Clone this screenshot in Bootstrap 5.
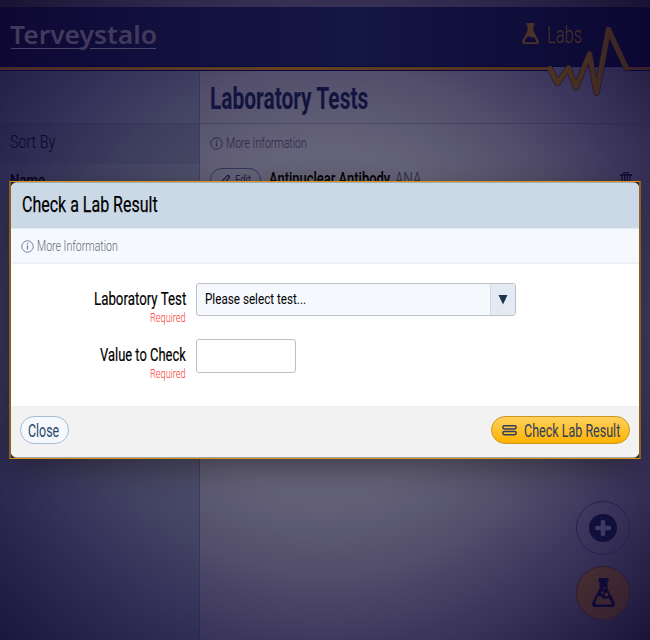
<!DOCTYPE html>
<html lang="en">
<head>
<meta charset="utf-8">
<meta name="viewport" content="width=device-width, initial-scale=1">
<title>Laboratory Tests</title>
<link href="https://cdn.jsdelivr.net/npm/bootstrap@5.3.0/dist/css/bootstrap.min.css" rel="stylesheet">
<style>
body{width:650px;height:640px;overflow:hidden;font-family:Roboto,"Open Sans",sans-serif;color:#000;
 background:radial-gradient(farthest-corner at 50% 50%,#69677d 0,#656379 38%,#524e6b 56%,#3b345b 74%,#1b1439 100%)}
.fit{display:inline-block;white-space:nowrap;line-height:1;text-align:left;flex:none;vertical-align:top}
.fit>span{display:inline-block;transform-origin:0 50%;vertical-align:top}
.topstrip{height:7px;background:rgba(20,10,30,.2)}
.masthead{height:60px;background:linear-gradient(90deg,#0e0733,#12113f 28%,#141643 55%,#100f3c 76%,#0c0632);border-bottom:1px solid #090238;padding:15px 0 0 10px}
.brand{font:600 25px/1 "Noto Sans","Open Sans",sans-serif;color:#423a5d}
.brandline{display:block;margin-top:1px}
.labs{color:#4a3229;font-size:24px;margin:1px 67px 0 0}
.pulse{left:0;top:20px;pointer-events:none}
.trace-edge{stroke:#1c1236;stroke-width:6.2}
.trace{stroke:url(#amber);stroke-width:5}
.trace-flat{stroke-width:3}.edge-flat{stroke-width:5;stroke:#0c0440}
.main-row{height:573px}
.side{width:200px;background:rgba(22,34,76,.24);border-right:1px solid rgba(30,30,80,.3);padding-top:56px}
.sort{height:41px;border-top:1px solid rgba(30,30,80,.15);background:rgba(20,20,50,.1);padding:8px 0 0 10px;font-size:19px;font-weight:300;color:#0b062a}
.namerow{padding:8px 0 0 10px;font-size:17px;font-weight:500;color:#060220}
.pagehead{height:57px;padding:16px 0 0 10px;border-bottom:1px solid rgba(30,30,80,.3);font-size:31px;font-weight:700;color:#13133f}
.info{font-size:14.5px;font-weight:300}
.info .fit{position:relative;top:1px}
.dim-info{height:44px;padding:0 0 5px 10px;color:#2c2845}
.testrow{padding-left:10px;height:24px}
.editpill{width:51px;height:24px;border:1px solid #33355c;border-radius:12px;color:#1b1d4a;font-size:13px;padding-left:8px}
.round-btn{width:54px;height:54px;border-radius:50%}
.fabs{right:20px;top:501px;gap:11px}
.fab-add{border:1px solid #252252}
.fab-lab{border:1px solid #2d1c30;background:linear-gradient(135deg,#482e32,#33202f)}
.dialog{left:9px;top:181px;width:632px;height:278px;border:solid;border-width:1px 2px;border-color:#d8930f #876022;background:#2c2838;box-shadow:0 9px 28px rgba(20,15,15,.45)}
.sheet{height:276px;border-radius:6px;overflow:hidden;background:#fff;border-top:1px solid #9eabba;border-bottom:1px solid #9ba1b2}
.dlg-title{height:45px;background:#cbd9e6;padding:11px 0 0 11px;font-size:22px;font-weight:400;-webkit-text-stroke:.25px #000}
.dlg-info{height:36px;background:#f5f9fe;border-bottom:2px solid #eff0f7;border-top:1px solid #e2eaf3;padding:1px 0 0 10px;color:#666a73}
.dlg-body{height:142px;padding-top:19px}
.field{height:56px;gap:10px}
.lab-col{width:175px;padding-top:7px;font-size:18.5px;font-weight:400;line-height:1;gap:2px}
.lab-name{-webkit-text-stroke:.2px #000}
.req{font-size:13px;font-weight:300;color:#ff3030}
.picker{width:320px;height:33px;border:1px solid #c0c1c5;border-radius:3px;background:#f5f9fe;font-size:15.5px;padding-left:8px;overflow:hidden}
.picker .fit{padding-top:1px}
.arrow{width:25px;background:#e3eaf4;border-left:1px solid #d2dae5}
.valuebox{width:100px;height:34px;border:1px solid #bfbfbf;border-radius:3px;background:#fff}
.dlg-foot{height:52px;background:#f2f2f2;padding:9px 9px 0;border-top:1px solid #ededed}
.pill{height:28px;border-radius:14px;font-size:18px;font-weight:400;color:#2a446c;padding:1px 0 0}
.pill-close{width:49px;border:1px solid #a9bdd4;background:#f5f8fd;padding-right:2px}
.pill-check{width:139px;border:1px solid #cd951d;background:linear-gradient(#ffd15d,#ffb300);color:#2b3c60;gap:7px}
</style>
<script src="https://cdn.jsdelivr.net/npm/bootstrap@5.3.0/dist/js/bootstrap.bundle.min.js"></script>
</head>
<body class="position-relative">
<div class="topstrip"></div>
<header class="masthead position-relative d-flex justify-content-between align-items-start">
  <div>
    <div class="fit brand" data-w="147"><span>Terveystalo</span></div>
    <svg class="brandline" width="147" height="3"><path d="M1 .5H71M80 .5H146" stroke="#4c4466"/></svg>
  </div>
  <div class="labs d-flex align-items-start">
    <svg width="17" height="22" viewBox="0 0 17 22"><path d="M4.500 0h8v2.200h-1v6l5 9q1.500 3.800-2 3.800h-12q-3.500 0-2-3.800l5-9v-6h-1z" fill="currentColor"/><path d="M5 14q2-1.500 3.500 0t3.500 0l2 3.500q1 1.700-1 1.700H4q-2 0-1-1.700z" fill="#0f0a3a"/></svg>
    <span class="fit fw-light" style="margin:0 1px 0 8px" data-w="35"><span>Labs</span></span>
  </div>
  <svg class="pulse position-absolute" width="650" height="72" viewBox="0 27 650 72" fill="none" stroke-linejoin="round" stroke-linecap="round">
    <defs><linearGradient id="amber" gradientUnits="userSpaceOnUse" x1="0" x2="650" y1="0" y2="0"><stop stop-color="#472c29"/><stop offset=".45" stop-color="#66431f"/><stop offset=".85" stop-color="#4c321f"/><stop offset="1" stop-color="#362226"/></linearGradient></defs>
    <path class="trace-edge edge-flat" d="M0 68.5H550M627 68.5H650"/>
    <path class="trace-edge" d="M550 68.5L557.5 83L568.5 68L576 87.500L589.500 54L596.500 93L608.500 29.500L626.500 68.500"/>
    <path class="trace trace-flat" d="M0 68.5H550M627 68.500H650"/>
    <path class="trace" d="M550 68.5L557.5 83L568.5 68L576 87.500L589.500 54L596.500 93L608.500 29.500L626.500 68.500"/>
  </svg>
</header>
<div class="main-row d-flex">
  <aside class="side flex-shrink-0">
    <div class="sort"><span class="fit" data-w="45"><span>Sort By</span></span></div>
    <div class="namerow"><span class="fit" data-w="35"><span>Name</span></span></div>
  </aside>
  <main class="flex-grow-1">
    <div class="pagehead"><h1 class="fit m-0" style="font-size:inherit;font-weight:inherit" data-w="158"><span>Laboratory Tests</span></h1></div>
    <div class="info dim-info d-flex align-items-center">
      <svg style="margin-right:3px" width="13" height="13" viewBox="0 0 13 13" fill="none" stroke="currentColor"><circle cx="6.500" cy="6.500" r="5.700"/><path d="M6.500 5.600v4M6.500 3.200v1.200" stroke-width="1.300"/></svg>
      <span class="fit" data-w="81"><span>More Information</span></span>
    </div>
    <div class="testrow d-flex align-items-center">
      <div class="editpill d-flex align-items-center">
        <svg width="12" height="13" viewBox="0 0 12 13" fill="none" stroke="currentColor" stroke-width="1.200"><path d="M1 12l1-4 6-6q1-1 2 0t0 2L4.500 10zM2.300 8.300l2 1.800"/></svg>
        <span class="fit" style="margin:-2px 0 0 4px" data-w="16"><span>Edit</span></span>
      </div>
      <span class="fit ms-2" style="font-size:18px;font-weight:500;margin-top:-2px" data-w="121"><span>Antinuclear Antibody</span></span>
      <span class="fit fw-light" style="font-size:18px;margin:-2px 0 0 5px;color:#272341" data-w="26"><span>ANA</span></span>
      <svg class="ms-auto" style="margin-right:18px" width="12" height="18" viewBox="0 0 12 18" fill="none" stroke="#121039"><path d="M0 4h12" stroke-width="2"/><path d="M4 3V1.600h4V3M2 4v13h8V4M4.700 5v11M7.300 5v11" stroke-width="1.400"/></svg>
    </div>
  </main>
</div>
<div class="fabs position-absolute d-flex flex-column">
  <div class="round-btn fab-add d-flex align-items-center justify-content-center"><svg width="28" height="28" viewBox="0 0 28 28"><circle cx="14" cy="14" r="14" fill="#110f3b"/><path d="M14 8v12M8 14h12" stroke="#3e3761" stroke-width="4.500" stroke-linecap="round"/></svg></div>
  <div class="round-btn fab-lab d-flex align-items-center justify-content-center"><svg width="23" height="30" viewBox="0 0 23 30"><path d="M6.500 0h10v3.500h-1V11l6.500 12q2.500 6-2 6H3q-4.500 0-2-6l6.500-12V3.500h-1z" fill="#0e0936"/><path d="M5.500 18l3.500.5 3 2.500 5-1 2.200 4.200q1 2.300-1 2.300H4.600q-2 0-1-2.300z" fill="#3c2632"/><circle cx="14.500" cy="16.500" r="1.900" fill="#3c2632"/><circle cx="10.500" cy="14.500" r="1.300" fill="#3c2632"/><circle cx="12.500" cy="10" r=".9" fill="#3c2632"/></svg></div>
</div>
<section class="dialog position-absolute" role="dialog" aria-label="Check a Lab Result">
  <div class="sheet">
    <div class="dlg-title"><span class="fit" data-w="136"><span>Check a Lab Result</span></span></div>
    <div class="dlg-info info d-flex align-items-center">
      <svg style="margin-right:3px" width="13" height="13" viewBox="0 0 13 13" fill="none" stroke="#71809f"><circle cx="6.500" cy="6.500" r="5.700"/><path d="M6.500 5.600v4M6.500 3.200v1.200" stroke-width="1.300"/></svg>
      <span class="fit" data-w="81"><span>More Information</span></span>
    </div>
    <div class="dlg-body">
      <div class="field d-flex">
        <div class="lab-col d-flex flex-column align-items-end"><span class="fit lab-name" data-w="92"><span>Laboratory Test</span></span><span class="fit req" data-w="36"><span>Required</span></span></div>
        <div class="picker d-flex align-items-center justify-content-between"><span class="fit" data-w="101"><span>Please select test...</span></span>
          <span class="arrow h-100 d-flex align-items-center justify-content-center"><svg width="10" height="10"><path d="M.5 0h9L5 9.500z" fill="#1c3350"/></svg></span></div>
      </div>
      <div class="field d-flex">
        <div class="lab-col d-flex flex-column align-items-end"><span class="fit lab-name" data-w="86"><span>Value to Check</span></span><span class="fit req" data-w="36"><span>Required</span></span></div>
        <div class="valuebox"></div>
      </div>
    </div>
    <div class="dlg-foot d-flex align-items-start justify-content-between">
      <button class="btn pill pill-close d-flex align-items-center justify-content-center"><span class="fit" data-w="31"><span>Close</span></span></button>
      <button class="btn pill pill-check d-flex align-items-center justify-content-center"><svg width="15" height="11" viewBox="0 0 15 11" fill="none" stroke="currentColor" stroke-width="1.400"><rect x=".8" y=".8" width="13.400" height="3.200" rx="1.400"/><rect x=".8" y="6.500" width="13.400" height="3.200" rx="1.400"/></svg><span class="fit" data-w="96"><span>Check Lab Result</span></span></button>
    </div>
  </div>
</section>
<script>
document.querySelectorAll('.fit').forEach(function (el) {
  var inner = el.firstElementChild, w = +el.dataset.w, n = inner.offsetWidth;
  inner.style.transform = 'scaleX(' + (w / n) + ')';
  inner.style.marginRight = (w - n) + 'px';
  el.style.width = w + 'px';
});
</script>
</body>
</html>
